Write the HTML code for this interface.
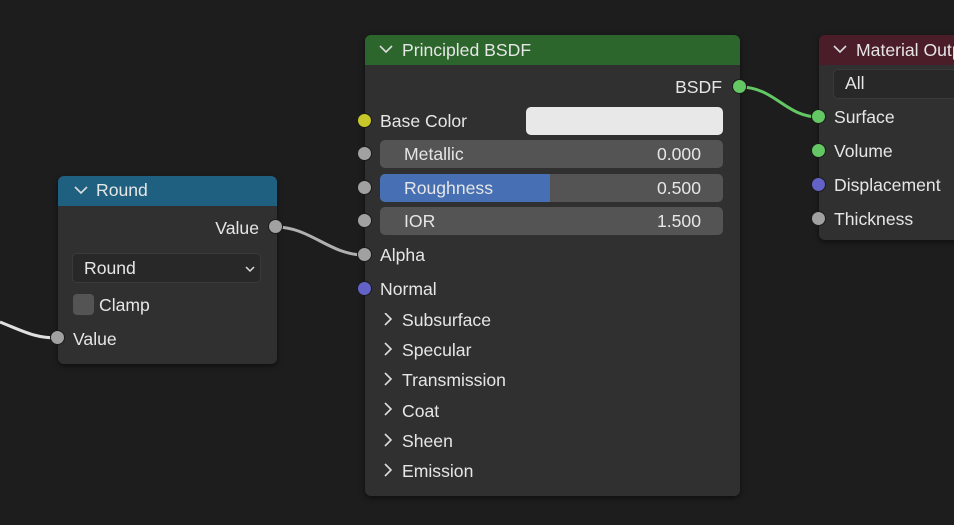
<!DOCTYPE html>
<html><head><meta charset="utf-8"><style>
*{margin:0;padding:0;box-sizing:border-box}
body{width:954px;height:525px;background:#1d1d1d;position:relative;overflow:hidden;font-family:"Liberation Sans","DejaVu Sans",sans-serif;font-size:17.6px;color:#e6e6e6}
.n{position:absolute;background:#303030;border-radius:6px;box-shadow:0 2px 6px rgba(0,0,0,.5);overflow:hidden}
.h{position:absolute;left:0;right:0;top:0;height:30px}
.t{position:absolute;line-height:20px;white-space:nowrap;margin-top:1px}
.s{position:absolute;width:15px;height:15px;border-radius:50%;border:1.5px solid #1a1a1a}
.g{background:#a1a1a1}.gr{background:#63c763}.y{background:#c7c729}.b{background:#6363c7}
.f{position:absolute;background:#545454;border-radius:5px;height:28px}
svg{position:absolute}
</style></head><body>
<svg width="954" height="525" style="left:0;top:0">
<path d="M0 322 C25 332,35 338,58 338" stroke="#e0e0e0" stroke-width="3" fill="none"/>
<path d="M276 227 C310 227,330 255,364 255" stroke="#b0b0b0" stroke-width="3" fill="none"/>
<path d="M740 87 C775 87,785 117,819 117" stroke="#63c763" stroke-width="3" fill="none"/>
</svg>

<div class="n" style="left:58px;top:176px;width:219px;height:188px">
<div class="h" style="background:#1f5f80"></div>
<svg style="left:16px;top:9px" width="14" height="10"><path d="M1 2 L7 8 L13 2" stroke="#ddd" stroke-width="1.6" fill="none"/></svg>
<div class="t" style="left:38px;top:3px">Round</div>
<div class="t" style="right:18px;top:41px">Value</div>
<div style="position:absolute;left:14px;top:77px;width:189px;height:30px;background:#282828;border:1px solid #3a3a3a;border-radius:5px"></div>
<div class="t" style="left:26px;top:81px">Round</div>
<svg style="left:187px;top:89px" width="10" height="8"><path d="M1 2 L5 6 L9 2" stroke="#ddd" stroke-width="1.5" fill="none"/></svg>
<div style="position:absolute;left:15px;top:118px;width:21px;height:21px;background:#545454;border-radius:4px"></div>
<div class="t" style="left:41px;top:118px">Clamp</div>
<div class="t" style="left:15px;top:152px">Value</div>
</div>
<div class="s g" style="left:268px;top:219px"></div>
<div class="s g" style="left:50px;top:330px"></div>

<div class="n" style="left:365px;top:35px;width:375px;height:461px">
<div class="h" style="background:#2c662c"></div>
<svg style="left:14px;top:9px" width="14" height="10"><path d="M1 2 L7 8 L13 2" stroke="#ddd" stroke-width="1.6" fill="none"/></svg>
<div class="t" style="left:37px;top:4px">Principled BSDF</div>
<div class="t" style="right:18px;top:41px">BSDF</div>
<div class="t" style="left:15px;top:75px">Base Color</div>
<div style="position:absolute;left:161px;top:72px;width:197px;height:28px;background:#e8e8e8;border-radius:5px"></div>
<div class="f" style="left:15px;top:105px;width:343px"></div>
<div class="t" style="left:39px;top:108px">Metallic</div><div class="t" style="right:39px;top:108px">0.000</div>
<div class="f" style="left:15px;top:139px;width:343px;overflow:hidden"><div style="width:170px;height:28px;background:#4670b3"></div></div>
<div class="t" style="left:39px;top:142px">Roughness</div><div class="t" style="right:39px;top:142px">0.500</div>
<div class="f" style="left:15px;top:172px;width:343px"></div>
<div class="t" style="left:39px;top:175px">IOR</div><div class="t" style="right:39px;top:175px">1.500</div>
<div class="t" style="left:15px;top:209px">Alpha</div>
<div class="t" style="left:15px;top:243px">Normal</div>
<svg style="left:17px;top:278px" width="12" height="230"><g stroke="#ddd" stroke-width="1.6" fill="none">
<path d="M3 0 L9 6 L3 12"/><path d="M3 30 L9 36 L3 42"/><path d="M3 60 L9 66 L3 72"/><path d="M3 90 L9 96 L3 102"/><path d="M3 121 L9 127 L3 133"/><path d="M3 151 L9 157 L3 163"/></g></svg>
<div class="t" style="left:37px;top:274px">Subsurface</div>
<div class="t" style="left:37px;top:304px">Specular</div>
<div class="t" style="left:37px;top:334px">Transmission</div>
<div class="t" style="left:37px;top:365px">Coat</div>
<div class="t" style="left:37px;top:395px">Sheen</div>
<div class="t" style="left:37px;top:425px">Emission</div>
</div>
<div class="s gr" style="left:732px;top:79px"></div>
<div class="s y" style="left:357px;top:113px"></div>
<div class="s g" style="left:357px;top:146px"></div>
<div class="s g" style="left:357px;top:180px"></div>
<div class="s g" style="left:357px;top:213px"></div>
<div class="s g" style="left:357px;top:247px"></div>
<div class="s b" style="left:357px;top:281px"></div>

<div class="n" style="left:819px;top:35px;width:160px;height:205px">
<div class="h" style="background:#4a1d28"></div>
<svg style="left:14px;top:9px" width="14" height="10"><path d="M1 2 L7 8 L13 2" stroke="#ddd" stroke-width="1.6" fill="none"/></svg>
<div class="t" style="left:37px;top:4px">Material Output</div>
<div style="position:absolute;left:14px;top:34px;width:160px;height:30px;background:#282828;border:1px solid #3a3a3a;border-radius:5px"></div>
<div class="t" style="left:26px;top:37px">All</div>
<div class="t" style="left:15px;top:71px">Surface</div>
<div class="t" style="left:15px;top:105px">Volume</div>
<div class="t" style="left:15px;top:139px">Displacement</div>
<div class="t" style="left:15px;top:173px">Thickness</div>
</div>
<div class="s gr" style="left:811px;top:109px"></div>
<div class="s gr" style="left:811px;top:143px"></div>
<div class="s b" style="left:811px;top:177px"></div>
<div class="s g" style="left:811px;top:211px"></div>
</body></html>
